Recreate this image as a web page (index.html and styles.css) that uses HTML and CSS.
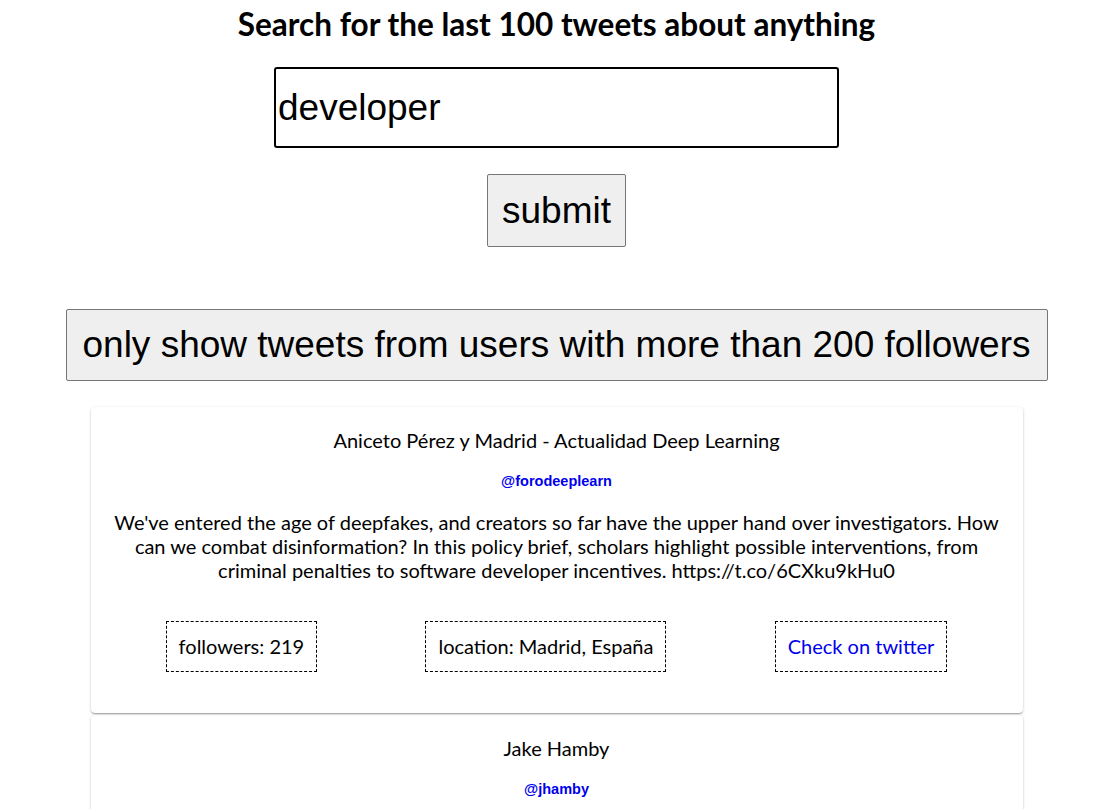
FILE: index.html
```html
<!DOCTYPE html>
<html lang="en">
<head>
<meta charset="utf-8">
<title>Tweet search</title>
<link rel="stylesheet" href="styles.css">
</head>
<body>
<div class="app">
  <h1 class="title">Search for the last 100 tweets about anything</h1>
  <form class="search">
    <input class="search-input" type="text" value="developer">
    <button class="btn submit" type="button">submit</button>
  </form>
  <button class="btn filter" type="button">only show tweets from users with more than 200 followers</button>
  <div class="list">
    <div class="card">
      <p class="name">Aniceto Pérez y Madrid - Actualidad Deep Learning</p>
      <p class="handle">@forodeeplearn</p>
      <p class="text">We've entered the age of deepfakes, and creators so far have the upper hand over investigators. How can we combat disinformation? In this policy brief, scholars highlight possible interventions, from criminal penalties to software developer incentives. https://t.co/6CXku9kHu0</p>
      <div class="meta">
        <span class="box">followers: 219</span>
        <span class="box">location: Madrid, España</span>
        <a class="box link" href="#">Check on twitter</a>
      </div>
    </div>
    <div class="card">
      <p class="name">Jake Hamby</p>
      <p class="handle">@jhamby</p>
      <p class="text">Placeholder</p>
    </div>
  </div>
</div>
</body>
</html>
```
FILE: styles.css
```css
body {
  margin: 0;
  font-family: Lato, "Open Sans", sans-serif;
  color: #000;
  background: #fff;
}
.app {
  display: flex;
  flex-direction: column;
  align-items: center;
  padding-left: 2px;
}
.title {
  margin: 4px 0 0;
  font-size: 31.5px;
  line-height: 40px;
  font-weight: 700;
}
.search {
  display: flex;
  flex-direction: column;
  align-items: center;
  margin-top: 23px;
}
.search-input {
  box-sizing: border-box;
  width: 565px;
  height: 81px;
  border: 2px solid #000;
  border-radius: 3px;
  padding: 1px 2px;
  font-family: "Liberation Sans", Arial, sans-serif;
  font-size: 37px;
  color: #000;
  outline: none;
}
.btn {
  font-family: "Liberation Sans", Arial, sans-serif;
  font-size: 37px;
  line-height: 43px;
  color: #000;
  background: #efefef;
  border: 1px solid #767676;
  border-radius: 2px;
  padding: 14px 14.5px;
}
.submit {
  margin-top: 26px;
}
.filter {
  margin-top: 62px;
  width: 982px;
  line-height: 42px;
}
.list {
  margin-top: 26px;
  width: 932px;
}
.card {
  padding: 21px 21px 41px;
  margin-bottom: 2px;
  border-radius: 4px;
  text-align: center;
  box-shadow: 0 1px 3px rgba(0,0,0,0.2), 0 1px 1px rgba(0,0,0,0.14), 0 2px 1px -1px rgba(0,0,0,0.12);
}
.name {
  margin: 0;
  font-size: 20px;
  line-height: 24px;
}
.handle {
  margin: 21px 0 0;
  font-family: "Liberation Sans", Arial, sans-serif;
  font-size: 14.5px;
  line-height: 16px;
  font-weight: 700;
  color: #0000ee;
}
.text {
  margin: 21px 0 0;
  font-size: 20px;
  line-height: 24px;
}
.meta {
  display: flex;
  justify-content: space-around;
  align-items: center;
  margin-top: 39px;
}
.box {
  border: 1px dashed #000;
  padding: 12px 12px;
  font-size: 20px;
  line-height: 25px;
  color: #000;
}
.link {
  color: #0000ee;
  text-decoration: none;
}
```
